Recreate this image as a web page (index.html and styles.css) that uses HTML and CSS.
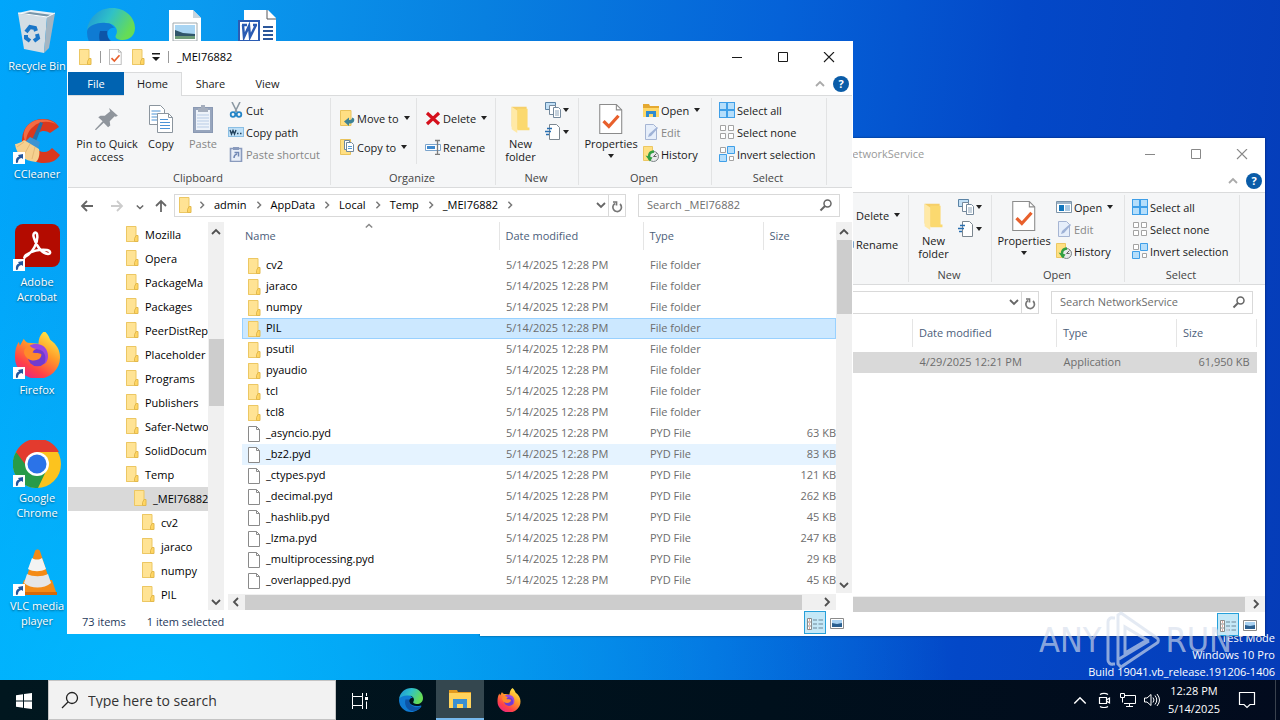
FILE: index.html
```
<!DOCTYPE html>
<html lang="en">
<head>
    <meta charset="UTF-8">
    <meta name="viewport" content="width=device-width, initial-scale=1.0">
    <title>Desktop</title>
    <link rel="stylesheet" href="styles.css">
</head>
<body>
    <!-- shared icons -->
    <svg class="sprite" aria-hidden="true">
        <symbol id="folder" viewBox="0 0 14 16"><path d="M1 0h10v10l2-1v7H1z" fill="#ffe08a"/><path d="M1.500.5h9.500v15H1.500z" fill="#ffe394" stroke="#ecc763"/><path d="M11 9.500h2v6h-3.500v-3z" fill="#ffd562" stroke="#e2b94e"/></symbol>
        <symbol id="folder-big" viewBox="0 0 24 32"><path d="M2 3h16v22l-10 2-6-3z" fill="#f6cf69"/><path d="M8 5h11v20h2v3H8z" fill="#fbd96f"/><path d="M2 3l6 4v24l-6-4z" fill="#ffe9a6"/></symbol>
        <symbol id="file" viewBox="0 0 14 16"><path d="M1.500.5h8l3 3v12h-11z" fill="#fff" stroke="#8a8a8a"/><path d="M9.500.5v3h3" fill="none" stroke="#8a8a8a"/></symbol>
        <symbol id="check-doc" viewBox="0 0 22 28"><path d="M.5.5h15.500l5 5v22H.5z" fill="#fff" stroke="#8b8b8b"/><path d="M16 .5v5h5" fill="none" stroke="#8b8b8b"/><path d="M4 16l5 5 9-10" fill="none" stroke="#e8602c" stroke-width="3"/></symbol>
        <symbol id="pin" viewBox="0 0 22 22"><path d="M13 1l8 7-2 1-1-.5-4.500 4.500.5 4-2 1.500-4-4-7 6.500-1 0 .5-1L7 13 3 9.500l2-1.500 4 0L14 4l-.5-1z" fill="#8f959c"/></symbol>
        <symbol id="copy" viewBox="0 0 26 30"><path d="M1.500 1.500h11l4 4v15h-15z" fill="#fff" stroke="#8b959e"/><path d="M3.500 7h9M3.500 10h9M3.500 13h9M3.500 16h9" stroke="#4d94d6"/><path d="M9.500 9.500h11l4 4v15h-15z" fill="#fff" stroke="#8b959e"/><path d="M20.500 9.500v4h4" fill="none" stroke="#8b959e"/><path d="M12 15.500h8M12 18.500h10M12 21.500h10M12 24.500h10" stroke="#4d94d6"/></symbol>
        <symbol id="paste" viewBox="0 0 22 30"><rect x="1.500" y="3.500" width="19" height="25" fill="#97a5bd" stroke="#8a99b3"/><path d="M4 6h14v20H4z" fill="#eef3fa"/><path d="M6 4h10v4H6zM9 1h4v4H9z" fill="#a5aebd"/><path d="M5 11h12M5 14h12M5 17h12M5 20h12M5 23h12" stroke="#b7cbe5"/></symbol>
        <symbol id="cut" viewBox="0 0 16 16"><path d="M4 0l5 10M12 0L7 10" stroke="#8c99a3" stroke-width="1.600"/><circle cx="5" cy="12.500" r="2.300" fill="none" stroke="#2485c7" stroke-width="1.800"/><circle cx="11" cy="12.500" r="2.300" fill="none" stroke="#2485c7" stroke-width="1.800"/></symbol>
        <symbol id="copy-path" viewBox="0 0 16 16"><rect x=".5" y="3.500" width="15" height="9" fill="#bfe0f7" stroke="#8bbfe4"/><path d="M2 6l1.500 4L5 6.500 6.500 10 8 6M9 9.500h1.500M12 9.500h1.500" fill="none" stroke="#24435e" stroke-width="1.400"/></symbol>
        <symbol id="paste-shortcut" viewBox="0 0 16 16"><path d="M2.500 2.500h11v13h-11z" fill="#e8eef8" stroke="#8a9bbd" stroke-width="1.600"/><path d="M5 1h6v3H5z" fill="#8a9bbd"/><path d="M6 12c0-3 1-3.500 3-4M6.500 6.500h4v4" fill="none" stroke="#7188b5" stroke-width="1.500"/></symbol>
        <symbol id="move-to" viewBox="0 0 16 16"><path d="M1.500.5h10.500v15H1.500z" fill="#ffdf83" stroke="#e9c35c"/><path d="M5 11.500l5-4v2.500c2 0 3-.5 3-2.500l2 1c1 3-1 5-5 5V16z" fill="#3e8396"/></symbol>
        <symbol id="copy-to" viewBox="0 0 16 16"><path d="M1.500.5h10v15h-10z" fill="#ffdf83" stroke="#e9c35c"/><path d="M5.500 1.500h5v9h-5z" fill="#fff" stroke="#71889c"/><path d="M7.500 3.500h5l2 2v7h-7z" fill="#fff" stroke="#71889c"/><path d="M9 7.500h4M9 9.500h4" stroke="#5598d4"/></symbol>
        <symbol id="delete" viewBox="0 0 16 16"><path d="M2 3l12 11M14 3L2 14" stroke="#d5101c" stroke-width="3.200"/></symbol>
        <symbol id="rename" viewBox="0 0 16 16"><path d="M.5 5.500h15v6H.5z" fill="#fff" stroke="#7ba4cc"/><path d="M2 7h8v3H2z" fill="#3f89ce"/><path d="M10 1.500h5M10 15.500h5M12.500 1.500v14" stroke="#7c7c7c" stroke-width="1.300"/></symbol>
        <symbol id="new-item" viewBox="0 0 16 16"><path d="M.5.500h10v7H.5z" fill="#c3e0f6" stroke="#5b83a5"/><path d="M4.500 3.500h6v9h-6z" fill="#fff" stroke="#75899c"/><path d="M8.500 5.500h5l2 2v8h-7z" fill="#fff" stroke="#75899c"/><path d="M10 9h4M10 11h4M10 13h4" stroke="#8ea5ba"/></symbol>
        <symbol id="easy-access" viewBox="0 0 16 16"><path d="M4.500.5h7l3 3v12h-10z" fill="#fff" stroke="#7c8790"/><path d="M0 7.500h6M2 4.500h5M1 10.500h3" stroke="#276eb0" stroke-width="1.500"/></symbol>
        <symbol id="open-folder" viewBox="0 0 16 16"><path d="M0 2h6l1 2h9v11H0z" fill="#e5a931"/><path d="M0 6h16v9H0z" fill="#ffd868"/><path d="M3 9h10v6h-3v-3H6v3H3z" fill="#2f8bd0"/></symbol>
        <symbol id="app-window" viewBox="0 0 16 16"><path d="M.5 2.500h15v11H.5z" fill="#fff" stroke="#7d94a8"/><path d="M1 3h14v2H1z" fill="#9fb6c9"/><path d="M3 6h5v6H3z" fill="#1277bd"/><path d="M9 7h5M9 9h5M9 11h5" stroke="#5792c4"/></symbol>
        <symbol id="edit" viewBox="0 0 16 16"><path d="M2.500.5h8l3 3v12h-11z" fill="#e6eefa" stroke="#a6b5d3"/><path d="M5 13l1-3 8-7 1 1-7 8z" fill="#9fb2d6"/></symbol>
        <symbol id="history" viewBox="0 0 16 16"><path d="M.5.5h9v14h-9z" fill="#ffe083" stroke="#ecc763"/><circle cx="10.500" cy="10.500" r="5" fill="#e7e9ea" stroke="#7b8386"/><path d="M10.500 10.500l3-3M10.500 10.500h3" stroke="#666"/><path d="M11 5.500c-4 0-6 3-4.500 8" fill="none" stroke="#32a043" stroke-width="2.500"/><path d="M2.500 9.500l7 2-2.500 4z" fill="#32a043"/></symbol>
        <symbol id="select-all" viewBox="0 0 16 16"><path d="M0 0h16v16H0z" fill="#3f9fe8"/><path d="M1 1h6v6H1zM9 1h6v6H9zM1 9h6v6H1zM9 9h6v6H9z" fill="#b5defb"/></symbol>
        <symbol id="select-none" viewBox="0 0 16 16"><path d="M1.500 1.500h5v5h-5zM9.500 1.500h5v5h-5zM1.500 9.500h5v5h-5zM9.500 9.500h5v5h-5z" fill="#fff" stroke="#a3a3a3"/></symbol>
        <symbol id="select-invert" viewBox="0 0 16 16"><path d="M1.500 1.500h5v5h-5zM10.500 10.500h4v4h-4z" fill="#fff" stroke="#a3a3a3"/><path d="M8.500.5h7v7h-7zM.5 8.500h7v7h-7z" fill="#b5defb" stroke="#3f9fe8"/></symbol>
        <symbol id="down" viewBox="0 0 10 10"><path d="M1 3l4 4 4-4" fill="none" stroke="currentColor" stroke-width="1.800"/></symbol>
        <symbol id="up" viewBox="0 0 10 10"><path d="M1 7l4-4 4 4" fill="none" stroke="currentColor" stroke-width="1.800"/></symbol>
        <symbol id="right" viewBox="0 0 10 10"><path d="M3 1l4 4-4 4" fill="none" stroke="currentColor" stroke-width="1.800"/></symbol>
        <symbol id="left" viewBox="0 0 10 10"><path d="M7 1L3 5l4 4" fill="none" stroke="currentColor" stroke-width="1.800"/></symbol>
        <symbol id="arrow-left" viewBox="0 0 14 14"><path d="M13 7H2M7 2L2 7l5 5" fill="none" stroke="currentColor" stroke-width="1.800"/></symbol>
        <symbol id="arrow-right" viewBox="0 0 14 14"><path d="M1 7h11M7 2l5 5-5 5" fill="none" stroke="currentColor" stroke-width="1.800"/></symbol>
        <symbol id="arrow-up" viewBox="0 0 14 14"><path d="M7 13V2M2 7l5-5 5 5" fill="none" stroke="currentColor" stroke-width="1.800"/></symbol>
        <symbol id="caret" viewBox="0 0 6 4"><path d="M0 0h6L3 4z" fill="currentColor"/></symbol>
        <symbol id="qat" viewBox="0 0 8 8"><path d="M0 0h8v1.500H0zM0 4h8L4 8z" fill="currentColor"/></symbol>
        <symbol id="refresh" viewBox="0 0 12 12"><path d="M9 3a4.300 4.300 0 1 1-5-.5M2 1h3.500v3.500" fill="none" stroke="#777" stroke-width="1.700"/></symbol>
        <symbol id="search" viewBox="0 0 14 14"><circle cx="8.500" cy="5.500" r="3.500" fill="none" stroke="currentColor" stroke-width="1.500"/><path d="M6 8L1.500 12.500" stroke="currentColor" stroke-width="2"/></symbol>
        <symbol id="win-min" viewBox="0 0 12 12"><path d="M1 5.500h10" stroke="currentColor"/></symbol>
        <symbol id="win-max" viewBox="0 0 12 12"><path d="M1.500.5h9v9h-9z" fill="none" stroke="currentColor"/></symbol>
        <symbol id="win-close" viewBox="0 0 12 12"><path d="M1 0l10 10M11 0L1 10" stroke="currentColor" stroke-width="1.100"/></symbol>
        <symbol id="view-details" viewBox="0 0 16 12"><path d="M.5.5h4v11h-4zM.5 4h4M.5 8h4" fill="#fff" stroke="#8b8b8b"/><path d="M6 2h4M11.500 2H16M6 6h4M11.500 6H16M6 10h4M11.500 10H16" stroke="#6d8798"/><path d="M2 2h1M2 6h1M2 10h1" stroke="#c2553c"/></symbol>
        <symbol id="view-large" viewBox="0 0 14 11"><path d="M.5.5h13v10H.5z" fill="#fff" stroke="#8b8b8b"/><path d="M2 2h10v7H2z" fill="#a9d2f2"/><path d="M2 5l5 1 5-1v4H2z" fill="#2b5f8f"/></symbol>
        <symbol id="shortcut" viewBox="0 0 12 12"><path d="M0 0h12v12H0z" fill="#fff"/><path d="M3 11c-.5-4 .5-6 3-6.500L5 3l5-1v5L8.500 6C6 6.500 5 8 5 10.500z" fill="#24569c"/></symbol>
        <linearGradient id="edge-wave" x1="0" y1="0" x2="1" y2=".4"><stop offset="0" stop-color="#1b8ed9"/><stop offset=".5" stop-color="#2fc1c8"/><stop offset="1" stop-color="#66dc55"/></linearGradient>
        <linearGradient id="fox-fire" x1=".8" y1="0" x2=".2" y2="1"><stop offset="0" stop-color="#fff04a"/><stop offset=".4" stop-color="#ff9a29"/><stop offset=".75" stop-color="#ff4148"/><stop offset="1" stop-color="#e6218b"/></linearGradient>
        <symbol id="edge" viewBox="0 0 48 48"><path d="M0 24c1-9 10-14 19-12l9 8c-5-1-9 3-7 9 3 6 12 9 23 6l1 1c-4 7-12 12-21 12A24 24 0 0 1 0 24z" fill="#0f7bd3"/><path d="M13 23c-3 9 2 20 12 23 7 1 16-3 20-9-12 5-26-2-25-14z" fill="#0d55a8"/><path d="M0 22C2 9 12 0 25 0c14 0 23 10 23 20 0 8-6 12-12 12-5 0-9-2-7-5 3-5-1-12-10-12C11 14 3 17 0 22z" fill="url(#edge-wave)"/></symbol>
        <symbol id="firefox" viewBox="0 0 48 48"><path d="M31 0c4 3 5 7 6 9 7 5 10 11 10 18a23 22 0 0 1-46 0C1 20 2 15 5 11l1 4 4-7c1 2 2 3 4 4 5 0 8 1 11 1 0-5 2-10 6-13z" fill="url(#fox-fire)"/><circle cx="24" cy="26" r="10" fill="#713bd0"/><path d="M12 17c5-3 10-2 13 1-3 0-5 1-6 4 3 1 7 0 9 2 0 6-9 8-14 4-4-3-5-8-2-11z" fill="#ff8a2a"/><path d="M16 15c4-3 14-2 17 4s2 12-2 15c3-8 0-14-6-15-3-1-6-1-9-4z" fill="#9a47e0"/></symbol>
    </svg>

    <div class="screen">
        <main class="desktop">
            <div class="shortcuts">
                <a class="shortcut" href="#">
                    <svg class="shortcut-icon" viewBox="0 0 48 48"><path d="M5 5l13-3 24 3-8 4z" fill="#e9f0f5"/><path d="M5 5l29 4-3 36-20-4z" fill="#d3dde4"/><path d="M34 9l8-4-6 35-5 5z" fill="#a4b5c2"/><path d="M8 6l26 3 5-2-22-3z" fill="#7795a9"/><path d="M5 5l29 4 8-4" fill="none" stroke="#fff"/><path d="M13 24l4-5 5 1 1 3M24 26l1 4-4 3M17 33l-4-3 0-3" fill="none" stroke="#1976c8" stroke-width="4"/></svg>
                    <span>Recycle Bin</span>
                </a>
                <a class="shortcut" href="#">
                    <svg class="shortcut-icon" viewBox="0 0 48 48"><path d="M46 11L37 17c-5-4-13-2-15 4-3 8 2 15 9 15 4 0 6-2 8-4l8 7c-3 5-8 8-16 8-14 0-23-10-22-24C10 10 19 3 30 3c8 0 13 3 16 8z" fill="#d9381e"/><path d="M44 9c-6-4-17-5-24 2-5 4-7 10-7 16-5-9-1-17 6-21C27 2 38 3 44 9z" fill="#f36b43"/><path d="M27 6l3 1-8 21-4-2z" fill="#286fa6"/><path d="M17 21l10 5-2 7-13-7z" fill="#3d94d2"/><path d="M11 24c-2 2-7 4-9 4 1 10 9 17 21 18 3-3 4-8 3-13z" fill="#f5d08f"/><path d="M11 26L4 31M17 28l-6 11M22 31l-3 12" stroke="#e3b978"/><use href="#shortcut" x="0" y="36" width="12" height="12"/></svg>
                    <span>CCleaner</span>
                </a>
                <a class="shortcut" href="#">
                    <svg class="shortcut-icon" viewBox="0 0 48 48"><rect x="2" y="0" width="45" height="43" rx="8" fill="#b30b00"/><path d="M12 33c7-4 14-14 12-23-1-3-5-1-3 4 3 9 8 15 14 16 3 0 3-3-1-4-7-1-16 1-21 5-2 2-2 4-1 2z" fill="none" stroke="#fff" stroke-width="2.500"/><use href="#shortcut" x="0" y="35" width="12" height="12"/></svg>
                    <span>Adobe Acrobat</span>
                </a>
                <a class="shortcut" href="#">
                    <svg class="shortcut-icon" viewBox="0 0 48 48"><use href="#firefox" x="1" y="-1" width="47" height="47"/><use href="#shortcut" x="0" y="35" width="12" height="12"/></svg>
                    <span>Firefox</span>
                </a>
                <a class="shortcut" href="#">
                    <svg class="shortcut-icon" viewBox="0 0 48 48"><circle cx="24" cy="24" r="24" fill="#fcc31e"/><path d="M24 24L3 12A24 24 0 0 0 25 48l9-19z" fill="#289b48"/><path d="M3 12a24 24 0 0 1 43 0H24l-9 16z" fill="#e33b2e"/><circle cx="24" cy="24" r="12" fill="#fff"/><circle cx="24" cy="24" r="9.500" fill="#2b73e8"/><use href="#shortcut" x="0" y="35" width="12" height="12"/></svg>
                    <span>Google Chrome</span>
                </a>
                <a class="shortcut" href="#">
                    <svg class="shortcut-icon" viewBox="0 0 48 48"><path d="M11 32h28l5 15H6z" fill="#f48b16"/><path d="M6 44h38v3H6z" fill="#d86907"/><path d="M22 3c1-2 4-2 5 0l11 34c-5 6-21 6-27 0z" fill="#f48b16"/><path d="M19 10c3 2 7 2 10 0l4 11c-5 3-13 3-18 0z" fill="#f3f3f3"/><path d="M14 26c6 3 15 3 21 0l3 9c-7 6-20 6-27 0z" fill="#e6e6e6"/><use href="#shortcut" x="0" y="36" width="12" height="12"/></svg>
                    <span>VLC media player</span>
                </a>
                <a class="shortcut top-row" href="#" aria-label="Edge">
                    <svg class="shortcut-icon" viewBox="0 0 48 48"><use href="#edge" width="48" height="48"/></svg>
                </a>
                <a class="shortcut top-row" href="#" aria-label="Picture">
                    <svg class="shortcut-icon" viewBox="0 0 48 48"><path d="M8 2h24l8 8v38H8z" fill="#fff"/><path d="M32 2v8h8z" fill="#c8d4dc"/><path d="M12 15h24v18H12z" fill="#fff" stroke="#a0a9ad"/><path d="M14 17h20v14H14z" fill="#a9d5f3"/><path d="M14 22l8 3 12 1v5H14z" fill="#31566b"/><path d="M14 28h20v3H14z" fill="#6e9b78"/></svg>
                </a>
                <a class="shortcut top-row" href="#" aria-label="Document">
                    <svg class="shortcut-icon" viewBox="0 0 48 48"><path d="M9 2h24l8 8v38H9z" fill="#fff"/><path d="M32 2v9h9" fill="none" stroke="#54565b"/><path d="M28 19h10M28 23h10M28 27h10M28 31h10" stroke="#2b579a" stroke-width="2"/><path d="M4 13h20v20H4z" fill="#fff" stroke="#2b5cb3" stroke-width="2"/><path d="M7 17h5M8 17l1 12 5-11 1 11 6-12M18 17h4" fill="none" stroke="#2b5cb3" stroke-width="2.500"/></svg>
                </a>
            </div>

            <div class="build-info">
                <p>Test Mode</p>
                <p>Windows 10 Pro</p>
                <p>Build 19041.vb_release.191206-1406</p>
            </div>

            <!-- background window -->
            <section class="window window-back">
                <header class="titlebar">
                    <h2 class="window-title">NetworkService</h2>
                    <div class="window-buttons">
                        <button aria-label="Minimize"><svg><use href="#win-min"/></svg></button>
                        <button aria-label="Maximize"><svg><use href="#win-max"/></svg></button>
                        <button aria-label="Close"><svg><use href="#win-close"/></svg></button>
                    </div>
                </header>
                <div class="tabs">
                    <span class="tabs-end"><svg class="collapse"><use href="#up"/></svg><button class="help" aria-label="Help">?</button></span>
                </div>
                <div class="ribbon">
                    <div class="group group-clipboard"></div>
                    <div class="group group-organize">
                        <div class="group-body">
                            <div class="stack stack-wide stack-first"></div>
                            <div class="stack stack-wide">
                                <button class="small"><svg><use href="#delete"/></svg>Delete<svg class="caret"><use href="#caret"/></svg></button>
                                <button class="small"><svg><use href="#rename"/></svg>Rename</button>
                            </div>
                        </div>
                    </div>
                    <div class="group group-new">
                        <div class="group-body">
                            <button class="big"><svg><use href="#folder-big"/></svg>New folder</button>
                            <div class="stack">
                                <button class="small" aria-label="New item"><svg><use href="#new-item"/></svg><svg class="caret"><use href="#caret"/></svg></button>
                                <button class="small" aria-label="Easy access"><svg><use href="#easy-access"/></svg><svg class="caret"><use href="#caret"/></svg></button>
                            </div>
                        </div>
                        <div class="group-name">New</div>
                    </div>
                    <div class="group group-open">
                        <div class="group-body">
                            <button class="big"><svg><use href="#check-doc"/></svg>Properties<svg class="caret"><use href="#caret"/></svg></button>
                            <div class="stack">
                                <button class="small"><svg><use href="#app-window"/></svg>Open<svg class="caret"><use href="#caret"/></svg></button>
                                <button class="small dim"><svg><use href="#edit"/></svg>Edit</button>
                                <button class="small"><svg><use href="#history"/></svg>History</button>
                            </div>
                        </div>
                        <div class="group-name">Open</div>
                    </div>
                    <div class="group group-select">
                        <div class="group-body">
                            <div class="stack">
                                <button class="small"><svg><use href="#select-all"/></svg>Select all</button>
                                <button class="small"><svg><use href="#select-none"/></svg>Select none</button>
                                <button class="small"><svg><use href="#select-invert"/></svg>Invert selection</button>
                            </div>
                        </div>
                        <div class="group-name">Select</div>
                    </div>
                </div>
                <div class="nav">
                    <div class="nav-arrows"></div>
                    <nav class="address">
                        <span class="address-end"><svg class="chevron"><use href="#down"/></svg><button aria-label="Refresh"><svg><use href="#refresh"/></svg></button></span>
                    </nav>
                    <label class="search"><input type="text" placeholder="Search NetworkService" aria-label="Search NetworkService"><svg><use href="#search"/></svg></label>
                </div>
                <div class="body">
                    <div class="tree"></div>
                    <div class="main">
                        <div class="list">
                            <table class="files">
                                <thead><tr><th class="col-name"></th><th class="col-date">Date modified</th><th class="col-type">Type</th><th class="col-size">Size</th></tr></thead>
                                <tbody><tr class="inactive"><td></td><td>4/29/2025 12:21 PM</td><td>Application</td><td>61,950 KB</td></tr></tbody>
                            </table>
                        </div>
                        <div class="hscroll"><svg><use href="#left"/></svg><i class="thumb"></i><svg><use href="#right"/></svg></div>
                    </div>
                </div>
                <footer class="status">
                    <button class="view on" aria-label="Details"><svg><use href="#view-details"/></svg></button>
                    <button class="view" aria-label="Large icons"><svg><use href="#view-large"/></svg></button>
                </footer>
            </section>

            <!-- active window -->
            <section class="window window-front">
                <header class="titlebar">
                    <svg class="title-folder"><use href="#folder"/></svg>
                    <i class="bar"></i>
                    <svg class="title-check"><use href="#check-doc"/></svg>
                    <svg class="title-folder"><use href="#folder"/></svg>
                    <svg class="title-more"><use href="#qat"/></svg>
                    <i class="bar"></i>
                    <h2 class="window-title">_MEI76882</h2>
                    <div class="window-buttons">
                        <button aria-label="Minimize"><svg><use href="#win-min"/></svg></button>
                        <button aria-label="Maximize"><svg><use href="#win-max"/></svg></button>
                        <button aria-label="Close"><svg><use href="#win-close"/></svg></button>
                    </div>
                </header>
                <div class="tabs">
                    <button class="tab tab-file">File</button>
                    <button class="tab tab-on">Home</button>
                    <button class="tab">Share</button>
                    <button class="tab">View</button>
                    <span class="tabs-end"><svg class="collapse"><use href="#up"/></svg><button class="help" aria-label="Help">?</button></span>
                </div>
                <div class="ribbon">
                    <div class="group group-clipboard">
                        <div class="group-body">
                            <button class="big big-pin"><svg><use href="#pin"/></svg>Pin to Quick access</button>
                            <button class="big"><svg><use href="#copy"/></svg>Copy</button>
                            <button class="big dim"><svg><use href="#paste"/></svg>Paste</button>
                            <div class="stack">
                                <button class="small"><svg><use href="#cut"/></svg>Cut</button>
                                <button class="small"><svg><use href="#copy-path"/></svg>Copy path</button>
                                <button class="small dim"><svg><use href="#paste-shortcut"/></svg>Paste shortcut</button>
                            </div>
                        </div>
                        <div class="group-name">Clipboard</div>
                    </div>
                    <div class="group group-organize">
                        <div class="group-body">
                            <div class="stack stack-wide stack-first">
                                <button class="small"><svg><use href="#move-to"/></svg>Move to<svg class="caret"><use href="#caret"/></svg></button>
                                <button class="small"><svg><use href="#copy-to"/></svg>Copy to<svg class="caret"><use href="#caret"/></svg></button>
                            </div>
                            <div class="stack stack-wide">
                                <button class="small"><svg><use href="#delete"/></svg>Delete<svg class="caret"><use href="#caret"/></svg></button>
                                <button class="small"><svg><use href="#rename"/></svg>Rename</button>
                            </div>
                        </div>
                        <div class="group-name">Organize</div>
                    </div>
                    <div class="group group-new">
                        <div class="group-body">
                            <button class="big"><svg><use href="#folder-big"/></svg>New folder</button>
                            <div class="stack">
                                <button class="small" aria-label="New item"><svg><use href="#new-item"/></svg><svg class="caret"><use href="#caret"/></svg></button>
                                <button class="small" aria-label="Easy access"><svg><use href="#easy-access"/></svg><svg class="caret"><use href="#caret"/></svg></button>
                            </div>
                        </div>
                        <div class="group-name">New</div>
                    </div>
                    <div class="group group-open">
                        <div class="group-body">
                            <button class="big"><svg><use href="#check-doc"/></svg>Properties<svg class="caret"><use href="#caret"/></svg></button>
                            <div class="stack">
                                <button class="small"><svg><use href="#open-folder"/></svg>Open<svg class="caret"><use href="#caret"/></svg></button>
                                <button class="small dim"><svg><use href="#edit"/></svg>Edit</button>
                                <button class="small"><svg><use href="#history"/></svg>History</button>
                            </div>
                        </div>
                        <div class="group-name">Open</div>
                    </div>
                    <div class="group group-select">
                        <div class="group-body">
                            <div class="stack">
                                <button class="small"><svg><use href="#select-all"/></svg>Select all</button>
                                <button class="small"><svg><use href="#select-none"/></svg>Select none</button>
                                <button class="small"><svg><use href="#select-invert"/></svg>Invert selection</button>
                            </div>
                        </div>
                        <div class="group-name">Select</div>
                    </div>
                </div>
                <div class="nav">
                    <div class="nav-arrows">
                        <button aria-label="Back"><svg><use href="#arrow-left"/></svg></button>
                        <button class="off" aria-label="Forward"><svg><use href="#arrow-right"/></svg></button>
                        <button class="recent" aria-label="Recent"><svg><use href="#down"/></svg></button>
                        <button aria-label="Up"><svg><use href="#arrow-up"/></svg></button>
                    </div>
                    <nav class="address">
                        <svg class="address-folder"><use href="#folder"/></svg>
                        <svg class="sep"><use href="#right"/></svg><a href="#">admin</a>
                        <svg class="sep"><use href="#right"/></svg><a href="#">AppData</a>
                        <svg class="sep"><use href="#right"/></svg><a href="#">Local</a>
                        <svg class="sep"><use href="#right"/></svg><a href="#">Temp</a>
                        <svg class="sep"><use href="#right"/></svg><a href="#">_MEI76882</a>
                        <svg class="sep"><use href="#right"/></svg>
                        <span class="address-end"><svg class="chevron"><use href="#down"/></svg><button aria-label="Refresh"><svg><use href="#refresh"/></svg></button></span>
                    </nav>
                    <label class="search"><input type="text" placeholder="Search _MEI76882" aria-label="Search _MEI76882"><svg><use href="#search"/></svg></label>
                </div>
                <div class="body">
                    <div class="tree">
                        <ul>
                            <li><svg><use href="#folder"/></svg>Mozilla</li>
                            <li><svg><use href="#folder"/></svg>Opera</li>
                            <li><svg><use href="#folder"/></svg>PackageMa</li>
                            <li><svg><use href="#folder"/></svg>Packages</li>
                            <li><svg><use href="#folder"/></svg>PeerDistRep</li>
                            <li><svg><use href="#folder"/></svg>Placeholder</li>
                            <li><svg><use href="#folder"/></svg>Programs</li>
                            <li><svg><use href="#folder"/></svg>Publishers</li>
                            <li><svg><use href="#folder"/></svg>Safer-Netwo</li>
                            <li><svg><use href="#folder"/></svg>SolidDocum</li>
                            <li><svg><use href="#folder"/></svg>Temp</li>
                            <li class="level2 current"><svg><use href="#folder"/></svg>_MEI76882</li>
                            <li class="level3"><svg><use href="#folder"/></svg>cv2</li>
                            <li class="level3"><svg><use href="#folder"/></svg>jaraco</li>
                            <li class="level3"><svg><use href="#folder"/></svg>numpy</li>
                            <li class="level3"><svg><use href="#folder"/></svg>PIL</li>
                        </ul>
                        <div class="vscroll vscroll-tree"><svg><use href="#up"/></svg><i class="thumb"></i><svg><use href="#down"/></svg></div>
                    </div>
                    <div class="main">
                        <div class="list">
                            <table class="files">
                                <thead><tr><th class="col-name">Name<svg class="sorted"><use href="#up"/></svg></th><th class="col-date">Date modified</th><th class="col-type">Type</th><th class="col-size">Size</th></tr></thead>
                                <tbody>
                                    <tr><td><svg><use href="#folder"/></svg>cv2</td><td>5/14/2025 12:28 PM</td><td>File folder</td><td></td></tr>
                                    <tr><td><svg><use href="#folder"/></svg>jaraco</td><td>5/14/2025 12:28 PM</td><td>File folder</td><td></td></tr>
                                    <tr><td><svg><use href="#folder"/></svg>numpy</td><td>5/14/2025 12:28 PM</td><td>File folder</td><td></td></tr>
                                    <tr class="selected"><td><svg><use href="#folder"/></svg>PIL</td><td>5/14/2025 12:28 PM</td><td>File folder</td><td></td></tr>
                                    <tr><td><svg><use href="#folder"/></svg>psutil</td><td>5/14/2025 12:28 PM</td><td>File folder</td><td></td></tr>
                                    <tr><td><svg><use href="#folder"/></svg>pyaudio</td><td>5/14/2025 12:28 PM</td><td>File folder</td><td></td></tr>
                                    <tr><td><svg><use href="#folder"/></svg>tcl</td><td>5/14/2025 12:28 PM</td><td>File folder</td><td></td></tr>
                                    <tr><td><svg><use href="#folder"/></svg>tcl8</td><td>5/14/2025 12:28 PM</td><td>File folder</td><td></td></tr>
                                    <tr><td><svg><use href="#file"/></svg>_asyncio.pyd</td><td>5/14/2025 12:28 PM</td><td>PYD File</td><td>63 KB</td></tr>
                                    <tr class="hovered"><td><svg><use href="#file"/></svg>_bz2.pyd</td><td>5/14/2025 12:28 PM</td><td>PYD File</td><td>83 KB</td></tr>
                                    <tr><td><svg><use href="#file"/></svg>_ctypes.pyd</td><td>5/14/2025 12:28 PM</td><td>PYD File</td><td>121 KB</td></tr>
                                    <tr><td><svg><use href="#file"/></svg>_decimal.pyd</td><td>5/14/2025 12:28 PM</td><td>PYD File</td><td>262 KB</td></tr>
                                    <tr><td><svg><use href="#file"/></svg>_hashlib.pyd</td><td>5/14/2025 12:28 PM</td><td>PYD File</td><td>45 KB</td></tr>
                                    <tr><td><svg><use href="#file"/></svg>_lzma.pyd</td><td>5/14/2025 12:28 PM</td><td>PYD File</td><td>247 KB</td></tr>
                                    <tr><td><svg><use href="#file"/></svg>_multiprocessing.pyd</td><td>5/14/2025 12:28 PM</td><td>PYD File</td><td>29 KB</td></tr>
                                    <tr><td><svg><use href="#file"/></svg>_overlapped.pyd</td><td>5/14/2025 12:28 PM</td><td>PYD File</td><td>45 KB</td></tr>
                                    <tr><td><svg><use href="#file"/></svg></td><td></td><td></td><td></td></tr>
                                </tbody>
                            </table>
                            <div class="vscroll"><svg><use href="#up"/></svg><i class="thumb"></i><svg><use href="#down"/></svg></div>
                        </div>
                        <div class="hscroll"><svg><use href="#left"/></svg><i class="thumb"></i><svg><use href="#right"/></svg></div>
                    </div>
                </div>
                <footer class="status">
                    <span>73 items</span>
                    <span>1 item selected</span>
                    <button class="view on" aria-label="Details"><svg><use href="#view-details"/></svg></button>
                    <button class="view" aria-label="Large icons"><svg><use href="#view-large"/></svg></button>
                </footer>
            </section>

            <div class="watermark">
                <span>ANY</span>
                <svg viewBox="0 0 56 60"><path d="M10 8H8a4 4 0 0 0-5 4v38a4 4 0 0 0 5 4h2M16 3l36 25a3 3 0 0 1 0 5L16 57l-3-3V5zM20 17v26l22-13zM14 49l30-18" fill="none" stroke="currentColor" stroke-width="3"/></svg>
                <span>RUN</span>
            </div>
        </main>

        <footer class="taskbar">
            <button class="start" aria-label="Start"><svg viewBox="0 0 16 16"><path d="M0 2.300L7 1.300V7.600H0zM8 1.100L16 0v7.600H8zM0 8.500h7v6.300L0 13.800zM8 8.500h8V16L8 14.900z" fill="#fff"/></svg></button>
            <label class="task-search"><svg viewBox="0 0 18 18"><circle cx="11" cy="7" r="5.500" fill="none" stroke="#222" stroke-width="1.300"/><path d="M7 11l-6 6" stroke="#222" stroke-width="1.300"/></svg><input type="text" placeholder="Type here to search" aria-label="Type here to search"></label>
            <button class="task" aria-label="Task view"><svg class="task-view" viewBox="0 0 16 16"><path d="M.5 0v3.500h10V0M.5 16v-3.500h10V16M.5 3.500v9M10.500 3.500v9M14.500 0v3M14.500 8.500V16" fill="none" stroke="#fff"/><path d="M13 4h3v3h-3z" fill="#fff"/></svg></button>
            <button class="task" aria-label="Edge"><svg><use href="#edge"/></svg></button>
            <button class="task task-on" aria-label="File Explorer"><svg viewBox="0 0 24 24"><path d="M1 3h8l1 2h13v4H1z" fill="#e39b1e"/><path d="M1 6h22v15H1z" fill="#ffd35c"/><path d="M5 12h14v9h-4v-4H9v4H5z" fill="#3a8fd0"/></svg></button>
            <button class="task" aria-label="Firefox"><svg><use href="#firefox"/></svg></button>
            <div class="tray">
                <svg viewBox="0 0 14 14"><path d="M2 10l5-5 5 5" fill="none" stroke="#fff" stroke-width="1.300"/></svg>
                <svg viewBox="0 0 16 16"><path d="M3.500 5.500h7v6h-7zM10.500 8l3-2v5l-3-2M4 2.500c2-1.500 6-1.500 8 0M4 14.500c2 1.300 6 1.300 8 0" fill="none" stroke="#fff" stroke-width="1.200"/></svg>
                <svg viewBox="0 0 16 16"><path d="M4 3.500h11.500v8H4M9.500 11.500v3M6 14.500h7M.5 1.500h4v4h-4zM2.500 5.500v5" fill="none" stroke="#fff"/></svg>
                <svg viewBox="0 0 16 16"><path d="M.5 6h2.500l4-3.500v11L3 10H.5zM9 5.500q2 2.500 0 5M11 3.500q3.500 4.500 0 9M13 2q5 6 0 12" fill="none" stroke="#fff"/></svg>
                <div class="clock"><time>12:28 PM</time><time>5/14/2025</time></div>
                <svg class="notes" viewBox="0 0 18 18"><path d="M1.500 1.500h15v12H12l-3 3-3-3H1.500z" fill="none" stroke="#fff" stroke-width="1.200"/></svg>
            </div>
        </footer>
    </div>
</body>
</html>
```
FILE: styles.css
```
* {
    box-sizing: border-box;
}
body {
    margin: 0;
    font-family: "Open Sans", "Noto Sans", sans-serif;
    font-size: 11px;
    line-height: 15px;
    color: #1a1a1a;
}
button, input {
    font: inherit;
    color: inherit;
    border: none;
    background: none;
    padding: 0;
    margin: 0;
}
a {
    color: inherit;
    text-decoration: none;
}
svg {
    flex: none;
}
.sprite {
    position: absolute;
    width: 0;
    height: 0;
}
.screen {
    display: flex;
    flex-direction: column;
    height: 100vh;
    overflow: hidden;
}

/* desktop */
.desktop {
    position: relative;
    flex: 1;
    min-height: 0;
    background: radial-gradient(ellipse at 12% 100%, rgba(0,185,255,0.9), rgba(0,180,255,0) 50%), linear-gradient(96deg, #00a6fb 0%, #0a9bf0 14%, #0880e0 36%, #0562d8 58%, #0348c8 76%, #053cb8 100%);
}
.shortcuts {
    display: grid;
    grid-template-rows: repeat(6, 108px);
    grid-auto-flow: column;
    grid-auto-columns: 74px;
}
.shortcut {
    display: flex;
    flex-direction: column;
    align-items: center;
    gap: 2px;
    padding: 8px 4px 0;
    color: #fff;
    text-align: center;
    text-shadow: 0 1px 2px rgba(0,0,0,0.5);
}
.top-row {
    grid-row: 1;
}
.shortcut span {
    width: min-content;
    min-width: 62px;
}
.shortcut-icon {
    width: 48px;
    height: 48px;
}
.build-info {
    position: absolute;
    right: 5px;
    bottom: 0;
    color: #fff;
    text-align: right;
    line-height: 17px;
}
.build-info p {
    margin: 0;
}
.watermark {
    position: absolute;
    right: 48px;
    bottom: 10px;
    display: flex;
    align-items: center;
    gap: 4px;
    color: rgba(214,222,236,0.65);
    font-family: "DejaVu Sans Condensed", "Liberation Sans", sans-serif;
    font-size: 34px;
    line-height: 40px;
}
.watermark svg {
    width: 56px;
    height: 60px;
}

/* windows */
.window {
    position: absolute;
    display: flex;
    flex-direction: column;
    background: #fff;
    padding: 0 1px;
}
.window-front {
    left: 67px;
    right: 427px;
    top: 41px;
    bottom: 46px;
}
.window-back {
    left: 480px;
    right: 15px;
    top: 138px;
    bottom: 44px;
    padding-right: 0;
    box-shadow: 0 0 2px rgba(0,0,0,0.5);
}
.titlebar {
    display: flex;
    align-items: center;
    height: 31px;
    padding-left: 10px;
}
.window-title {
    margin: 0;
    font-size: 11px;
    font-weight: normal;
    color: #000;
}
.window-back .window-title {
    padding-left: 353px;
    color: #999;
}
.window-back .titlebar {
    color: #888;
}
.title-folder {
    width: 14px;
    height: 16px;
}
.title-check {
    width: 13px;
    height: 16px;
    margin-right: 9px;
}
.title-more {
    width: 8px;
    height: 8px;
    margin-left: 7px;
}
.bar {
    width: 1px;
    height: 12px;
    margin: 0 8px;
    background: #999;
}
.window-buttons {
    display: flex;
    margin-left: auto;
}
.window-buttons button {
    width: 46px;
    height: 30px;
}
.window-buttons svg {
    width: 12px;
    height: 12px;
    vertical-align: middle;
}
.tabs {
    display: flex;
    height: 23px;
}
.tab {
    width: 57px;
}
.tab-file {
    width: 56px;
    background: #0063b1;
    color: #fff;
}
.tab-on {
    width: 58px;
    height: 24px;
    border: 1px solid #dadbdc;
    border-width: 1px 1px 0 0;
    background: #f5f6f7;
    padding-bottom: 2px;
    z-index: 1;
}
.tabs-end {
    display: flex;
    align-items: center;
    gap: 8px;
    margin-left: auto;
    padding-right: 3px;
}
.collapse {
    width: 10px;
    height: 10px;
    color: #aaa;
}
.help {
    width: 16px;
    height: 16px;
    border-radius: 50%;
    background: #0a5ca8;
    color: #fff;
    font-weight: bold;
}

/* ribbon */
.ribbon {
    display: flex;
    height: 93px;
    flex: none;
    border: 1px solid #dadbdc;
    border-width: 1px 0;
    background: #f5f6f7;
}
.group {
    display: flex;
    flex-direction: column;
    justify-content: space-between;
    margin: 2px 0;
    border-right: 1px solid #e2e3e4;
    flex: none;
}
.group-clipboard { width: 263px; }
.group-organize { width: 165px; }
.group-new { width: 83px; }
.group-open { width: 133px; }
.group-select { width: 115px; }
.group-body {
    display: flex;
}
.group-name {
    padding-right: 2px;
    text-align: center;
    color: #444;
}
.big {
    display: flex;
    flex-direction: column;
    align-items: center;
    width: 42px;
    padding-top: 6px;
    line-height: 13px;
}
.big svg {
    width: 26px;
    height: 30px;
    margin-bottom: 3px;
}
.big-pin {
    width: 72px;
    padding-left: 6px;
}
.big-pin svg {
    width: 24px;
}
.group-clipboard .stack {
    padding-left: 4px;
}
.group-new .big {
    width: 49px;
}
.group-open .big {
    width: 64px;
}
.stack {
    display: flex;
    flex-direction: column;
    padding-top: 2px;
}
.stack-wide {
    gap: 7px;
    padding: 10px 0 5px 8px;
}
.stack-first {
    width: 86px;
    border-right: 1px solid #e2e3e4;
}
.group-select .stack {
    padding-left: 7px;
}
.small {
    display: flex;
    align-items: center;
    gap: 2px;
    height: 22px;
    padding-bottom: 2px;
    white-space: nowrap;
}
.small svg {
    width: 16px;
    height: 16px;
}
.small .caret, .big .caret {
    width: 6px;
    height: 4px;
    margin: 0 0 0 3px;
    color: #222;
}
.big .caret {
    margin: 4px 0 0;
}
.group-new .small .caret {
    margin: 0;
}
.dim {
    color: #868686;
}

/* address row */
.nav {
    display: flex;
    align-items: center;
    height: 34px;
    flex: none;
    padding-right: 12px;
}
.nav-arrows {
    display: flex;
    align-items: center;
    gap: 16px;
    width: 106px;
    padding-left: 12px;
    color: #666;
}
.nav-arrows svg {
    width: 14px;
    height: 14px;
    vertical-align: middle;
}
.nav-arrows .recent {
    margin: 0 -6px 0 -4px;
}
.nav-arrows .recent svg {
    width: 8px;
    height: 8px;
}
.off {
    color: #ccc;
}
.address {
    display: flex;
    align-items: center;
    flex: 1;
    height: 23px;
    border: 1px solid #d9d9d9;
    color: #000;
}
.address a, .search input {
    padding-bottom: 2px;
}
.address-folder {
    width: 14px;
    height: 16px;
    margin: 0 5px 0 3px;
}
.sep {
    width: 8px;
    height: 8px;
    margin: 0 8px 0 1px;
    color: #777;
}
.address a {
    margin-right: 7px;
}
.address-end {
    display: flex;
    align-items: center;
    margin-left: auto;
    height: 100%;
}
.address-end button {
    width: 17px;
    height: 100%;
    border-left: 1px solid #d9d9d9;
}
.address-end button svg {
    width: 12px;
    height: 12px;
    vertical-align: middle;
}
.chevron {
    width: 10px;
    height: 10px;
    margin-right: 2px;
    color: #666;
}
.search {
    display: flex;
    align-items: center;
    width: 202px;
    height: 23px;
    margin-left: 12px;
    padding: 0 6px 0 8px;
    border: 1px solid #d9d9d9;
    color: #666;
}
.search input {
    flex: 1;
    min-width: 0;
}
.search svg {
    width: 14px;
    height: 14px;
}
input::placeholder {
    color: #6d6d6d;
    opacity: 1;
}

/* folder tree */
.body {
    display: flex;
    flex: 1;
    min-height: 0;
}
.tree {
    display: flex;
    width: 156px;
    flex: none;
}
.tree ul {
    flex: 1;
    min-width: 0;
    margin: 0;
    padding: 1px 0 0;
    list-style: none;
    overflow: hidden;
}
.tree li {
    display: flex;
    align-items: center;
    gap: 6px;
    height: 24px;
    padding: 0 0 2px 57px;
    color: #000;
    white-space: nowrap;
    overflow: hidden;
}
.tree li svg {
    width: 14px;
    height: 16px;
}
.tree .level2 {
    padding-left: 65px;
}
.tree .level3 {
    padding-left: 73px;
}
.tree .current {
    background: #d9d9d9;
}

/* file list */
.main {
    display: flex;
    flex-direction: column;
    flex: 1;
    min-width: 0;
    padding-left: 4px;
}
.list {
    display: flex;
    align-items: flex-start;
    flex: 1;
    min-height: 0;
    padding-left: 14px;
    overflow: hidden;
}
.files {
    flex: 1;
    width: 100%;
    table-layout: fixed;
    border-collapse: collapse;
}
.window-back .list {
    padding-right: 8px;
}
.files th {
    position: relative;
    height: 28px;
    padding: 0 0 2px 6px;
    border-right: 1px solid #e5e5e5;
    text-align: left;
    font-weight: normal;
    color: #4c607a;
}
.files .col-name {
    padding-left: 3px;
}
.window-front .files .col-size {
    border-right: none;
}
.col-date { width: 144px; }
.col-type { width: 120px; }
.col-size { width: 73px; }
.window-back .col-size { width: 80px; }
.files tbody::before {
    content: "";
    display: block;
    height: 5px;
}
.files td {
    height: 21px;
    padding: 0 0 2px 7px;
    color: #6d6d6d;
    white-space: nowrap;
}
.files td:first-child {
    padding: 0 0 0 5px;
    color: #000;
}
.files td:last-child {
    text-align: right;
}
.window-back .files td:last-child {
    padding-right: 7px;
}
.files td svg {
    width: 14px;
    height: 16px;
    margin-right: 5px;
    vertical-align: middle;
}
.selected {
    background: #cce8ff;
    box-shadow: inset 0 0 0 1px #99d1ff;
}
.hovered {
    background: #e5f3ff;
}
.inactive {
    background: #d9d9d9;
}
.sorted {
    position: absolute;
    left: 48%;
    top: 0;
    width: 8px;
    height: 8px;
    color: #888;
}

/* scrollbars */
.vscroll {
    display: flex;
    flex-direction: column;
    align-items: center;
    align-self: stretch;
    justify-content: space-between;
    width: 16px;
    flex: none;
    padding: 5px 0 3px;
    background: #f0f0f0;
    color: #505050;
}
.vscroll svg, .hscroll svg {
    width: 10px;
    height: 10px;
}
.vscroll .thumb {
    width: 15px;
    height: 74px;
    margin: 3px 0 auto;
    background: #cdcdcd;
}
.vscroll-tree .thumb {
    height: 67px;
    margin: auto 0 191px;
}
.hscroll {
    display: flex;
    align-items: center;
    height: 16px;
    margin: 1px 16px 0 0;
    padding: 0 4px 0 3px;
    background: #f0f0f0;
    color: #505050;
}
.hscroll .thumb {
    flex: 1;
    height: 15px;
    margin: 0 20px 0 4px;
    background: #cdcdcd;
}
.window-back .hscroll {
    margin-right: 0;
}
.window-back .hscroll .thumb {
    margin-right: 6px;
}
.status {
    display: flex;
    align-items: center;
    height: 24px;
    flex: none;
    gap: 21px;
    padding: 0 6px 0 14px;
    color: #1e395b;
}
.status span {
    padding-bottom: 2px;
}
.view {
    width: 20px;
    height: 23px;
    margin-left: -20px;
}
.view svg {
    width: 14px;
    height: 11px;
    vertical-align: middle;
}
.view.on {
    width: 22px;
    margin-left: auto;
    border: 1px solid #26a0da;
    background: #c4e8f7;
}
.view.on svg {
    width: 16px;
    height: 12px;
}
.view:last-child {
    margin-right: -1px;
}

/* taskbar */
.taskbar {
    display: flex;
    height: 40px;
    flex: none;
    background: linear-gradient(90deg, #01171f, #00101c 60%, #020b1e);
}
.start {
    width: 48px;
}
.start svg {
    width: 16px;
    height: 16px;
    vertical-align: middle;
}
.task-search {
    display: flex;
    align-items: center;
    gap: 9px;
    width: 288px;
    margin-right: 2px;
    padding-left: 12px;
    border: 1px solid #c4c4c4;
    background: #f2f2f2;
    color: #222;
    font-size: 14px;
}
.task-search svg {
    width: 18px;
    height: 18px;
}
.task-search input {
    flex: 1;
}
.task-search input::placeholder {
    color: #333;
}
.task {
    width: 48px;
    margin-right: 1px;
}
.task svg {
    width: 24px;
    height: 24px;
    vertical-align: middle;
}
.task .task-view {
    width: 16px;
    height: 16px;
    margin-right: 4px;
}
.task-on {
    background: #34474f;
    border-bottom: 2px solid #76b9ed;
}
.tray {
    display: flex;
    align-items: center;
    gap: 8px;
    margin: 0 4px 0 auto;
    padding-right: 19px;
    border-right: 1px solid #3a424e;
}
.tray svg {
    width: 16px;
    height: 16px;
}
.clock {
    display: flex;
    flex-direction: column;
    align-items: center;
    color: #fff;
    line-height: 18px;
}
.tray .notes {
    width: 18px;
    height: 18px;
    margin-left: 10px;
}
```
